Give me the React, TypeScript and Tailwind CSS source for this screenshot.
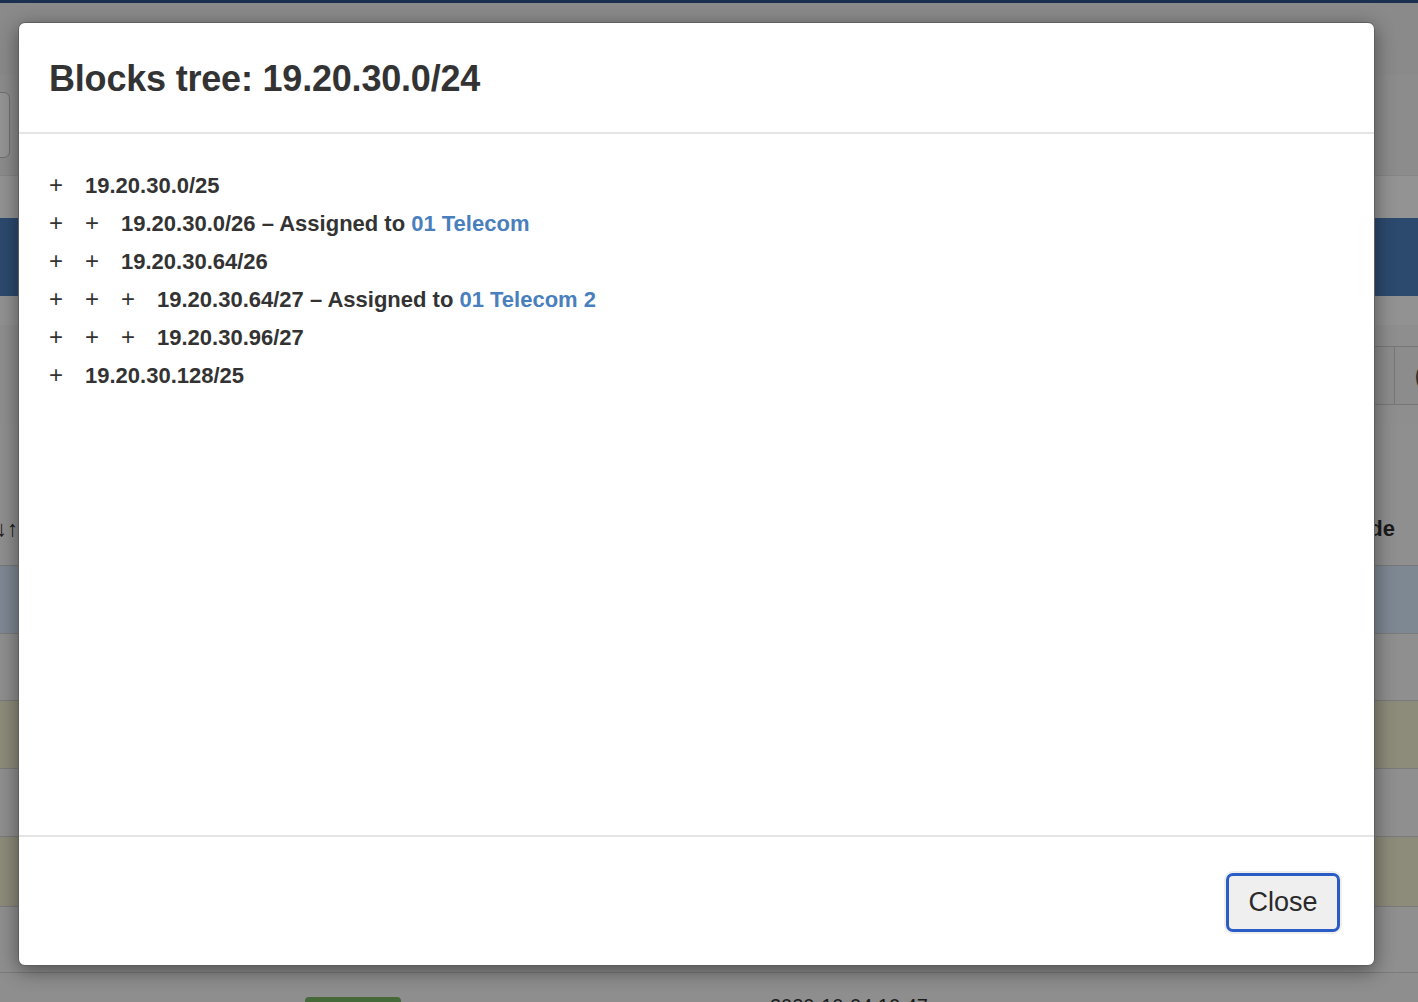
import React from 'react';

type TreeRow = { depth: number; cidr: string; assignee?: string };

const rows: TreeRow[] = [
  { depth: 1, cidr: '19.20.30.0/25' },
  { depth: 2, cidr: '19.20.30.0/26', assignee: '01 Telecom' },
  { depth: 2, cidr: '19.20.30.64/26' },
  { depth: 3, cidr: '19.20.30.64/27', assignee: '01 Telecom 2' },
  { depth: 3, cidr: '19.20.30.96/27' },
  { depth: 1, cidr: '19.20.30.128/25' },
];

const Backdrop: React.FC = () => (
  <div className="flex flex-col w-full h-[1002px] overflow-hidden">
    <div className="h-[3px] bg-[#1b3050]" />
    <div className="h-[72px] bg-[#8a8a8a]" />
    <div className="h-[100px] bg-[#8c8c8c] flex items-center">
      <div className="h-[66px] w-[200px] -ml-[190px] rounded-md border border-[#6f6f6f] bg-[#949494]" />
    </div>
    <div className="h-[43px] bg-[#939393] border-t border-[#858585]" />
    <div className="h-[78px] bg-[#2c4a6e]" />
    <div className="h-[29px] bg-[#929292]" />
    <div className="h-[100px] bg-[#8e8e8e] flex items-center justify-end">
      <div className="flex h-[59px] -mr-[30px]">
        <div className="w-[50px] border border-[#777] bg-[#8c8c8c]" />
        <div className="w-[53px] border border-l-0 border-[#777] bg-[#8c8c8c] flex items-center pl-5 text-[22px] text-[#333] font-bold">
          (
        </div>
      </div>
    </div>
    <div className="h-[140px] bg-[#8f8f8f] flex items-end pb-[20px] justify-between text-[22px] font-bold text-[#1a1a1a]">
      <span className="-ml-[4px]">↓↑</span>
      <span className="mr-[23px]">Mode</span>
    </div>
    <div className="h-[68px] bg-[#7e8893] border-t border-[#777]" />
    <div className="h-[67px] bg-[#8f8f8f] border-t border-[#7a7a7a]" />
    <div className="h-[68px] bg-[#8d8b7a] border-t border-[#7a7a7a]" />
    <div className="h-[68px] bg-[#8f8f8f] border-t border-[#7a7a7a]" />
    <div className="h-[70px] bg-[#8d8b7a] border-t border-[#7a7a7a]" />
    <div className="h-[66px] bg-[#8f8f8f] border-t border-[#7a7a7a]" />
    <div className="flex-1 bg-[#8e8e8e] border-t border-[#7a7a7a] relative">
      <div className="absolute left-[305px] top-[24px] w-[96px] h-[20px] rounded bg-[#46693a]" />
      <div className="absolute left-[770px] top-[18px] text-[20px] text-[#1a1a1a]">2020-10-04 10:47</div>
    </div>
  </div>
);

export default function App() {
  return (
    <div className="relative w-[1418px] h-[1002px] overflow-hidden font-['Liberation_Sans',Arial,sans-serif]">
      <Backdrop />
      <div className="absolute left-[18px] top-[22px] w-[1357px] h-[944px] bg-white rounded-[7px] border border-[#5e5e5e] shadow-[0_5px_20px_rgba(0,0,0,0.45)] flex flex-col">
        <div className="h-[111px] shrink-0 border-b-2 border-[#e5e5e5] flex items-center px-[30px] pt-[2px]">
          <h1 className="text-[36px] font-bold text-[#333] tracking-[-0.2px]">Blocks tree: 19.20.30.0/24</h1>
        </div>
        <div className="flex-1 pt-[38px] px-[30px] flex flex-col gap-[12px]">
          {rows.map((r, i) => (
            <div key={i} className="flex items-center h-[26px] text-[22px] text-[#333]">
              {Array.from({ length: r.depth }).map((_, j) => (
                <span key={j} className="w-[36px] shrink-0 text-[24px] leading-none">+</span>
              ))}
              <span className="font-bold">
                {r.cidr}
                {r.assignee && (
                  <>
                    {' – Assigned to '}
                    <span className="text-[#4a7fbd]">{r.assignee}</span>
                  </>
                )}
              </span>
            </div>
          ))}
        </div>
        <div className="h-[130px] shrink-0 border-t-2 border-[#e5e5e5] flex items-center justify-end pr-[32px] pt-[2px]">
          <div className="rounded-[9px] p-[2px] bg-[#eeeeee]">
            <button className="w-[114px] h-[59px] rounded-[7px] border-[3px] border-[#2b5cc5] bg-[#efefef] text-[27px] text-[#2a2a2a]">
              Close
            </button>
          </div>
        </div>
      </div>
    </div>
  );
}
